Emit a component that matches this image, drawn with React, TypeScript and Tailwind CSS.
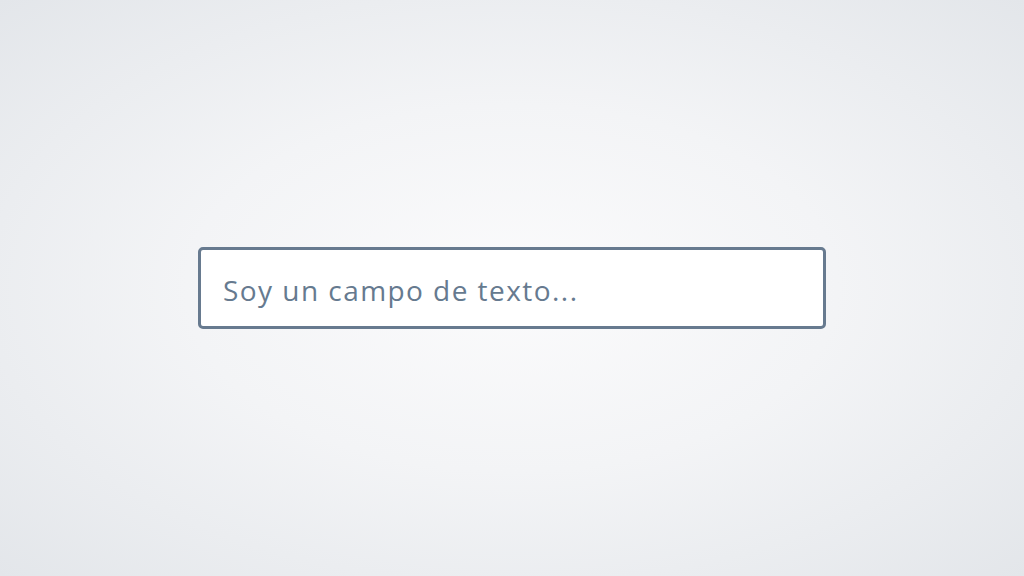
export default function App() {
  return (
    <div className="w-[1024px] h-[576px] flex items-center justify-center bg-[radial-gradient(ellipse_at_center,#fbfbfc_0%,#f3f4f6_45%,#e3e6ea_100%)]">
      <div className="w-[628px] h-[82px] flex items-center px-[22px] bg-white border-[3px] border-[#677a8f] rounded-[5px]">
        <input
          className="w-full bg-transparent outline-none text-[28px] tracking-[1.45px] text-[#667a8f] placeholder:text-[#667a8f] mt-[3px]"
          style={{ fontFamily: "'Open Sans', Lato, sans-serif" }}
          placeholder="Soy un campo de texto..."
        />
      </div>
    </div>
  );
}
